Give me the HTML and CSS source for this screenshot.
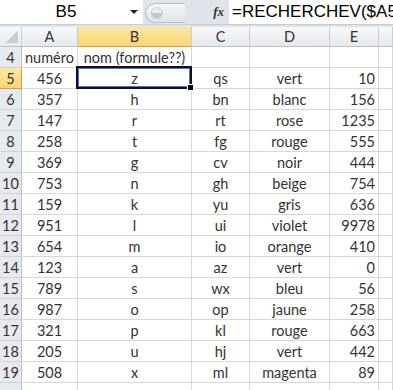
FILE: index.html
```html
<!DOCTYPE html>
<html lang="fr">
<head>
  <meta charset="UTF-8">
  <meta name="viewport" content="width=device-width, initial-scale=1.0">
  <title>Feuil1 - RECHERCHEV</title>
  <link rel="stylesheet" href="styles.css">
</head>
<body>
  <div class="formula-bar">
    <div class="name-box">
      <span class="cell-ref">B5</span>
      <span class="drop"></span>
    </div>
    <div class="tools">
      <div class="capsule"><span class="dot"></span></div>
      <span class="fx">fx</span>
    </div>
    <div class="formula">=RECHERCHEV($A5</div>
  </div>
  <div class="strip"></div>

  <table class="sheet">
    <thead>
      <tr>
        <th class="corner"><span class="tri"></span></th>
        <th class="col-a">A</th>
        <th class="col-b active">B</th>
        <th class="col-c">C</th>
        <th class="col-d">D</th>
        <th class="col-e">E</th>
        <th class="col-f"></th>
      </tr>
    </thead>
    <tbody>
      <tr><th>4</th><td>numéro</td><td class="title">nom (formule??)</td><td></td><td></td><td class="num"></td><td></td></tr>
      <tr><th class="active">5</th><td>456</td><td class="selected">z<span class="sel-box"><span class="handle"></span></span></td><td>qs</td><td>vert</td><td class="num">10</td><td></td></tr>
      <tr><th>6</th><td>357</td><td>h</td><td>bn</td><td>blanc</td><td class="num">156</td><td></td></tr>
      <tr><th>7</th><td>147</td><td>r</td><td>rt</td><td>rose</td><td class="num">1235</td><td></td></tr>
      <tr><th>8</th><td>258</td><td>t</td><td>fg</td><td>rouge</td><td class="num">555</td><td></td></tr>
      <tr><th>9</th><td>369</td><td>g</td><td>cv</td><td>noir</td><td class="num">444</td><td></td></tr>
      <tr><th>10</th><td>753</td><td>n</td><td>gh</td><td>beige</td><td class="num">754</td><td></td></tr>
      <tr><th>11</th><td>159</td><td>k</td><td>yu</td><td>gris</td><td class="num">636</td><td></td></tr>
      <tr><th>12</th><td>951</td><td>l</td><td>ui</td><td>violet</td><td class="num">9978</td><td></td></tr>
      <tr><th>13</th><td>654</td><td>m</td><td>io</td><td>orange</td><td class="num">410</td><td></td></tr>
      <tr><th>14</th><td>123</td><td>a</td><td>az</td><td>vert</td><td class="num">0</td><td></td></tr>
      <tr><th>15</th><td>789</td><td>s</td><td>wx</td><td>bleu</td><td class="num">56</td><td></td></tr>
      <tr><th>16</th><td>987</td><td>o</td><td>op</td><td>jaune</td><td class="num">258</td><td></td></tr>
      <tr><th>17</th><td>321</td><td>p</td><td>kl</td><td>rouge</td><td class="num">663</td><td></td></tr>
      <tr><th>18</th><td>205</td><td>u</td><td>hj</td><td>vert</td><td class="num">442</td><td></td></tr>
      <tr><th>19</th><td>508</td><td>x</td><td>ml</td><td>magenta</td><td class="num">89</td><td></td></tr>
      <tr><th></th><td></td><td></td><td></td><td></td><td class="num"></td><td></td></tr>
    </tbody>
  </table>
</body>
</html>
```

FILE: styles.css
```css
body {
  margin: 0;
  width: 393px;
  height: 390px;
  overflow: hidden;
  background: #fff;
  font-family: Lato, "Open Sans", sans-serif;
}

/* formula bar */
.formula-bar {
  display: flex;
  height: 24px;
  background: #dfe4ea;
}

.name-box {
  width: 143px;
  display: flex;
  align-items: center;
  background: #fff;
}

.cell-ref {
  flex: 1;
  text-align: center;
  font-family: "Liberation Sans", Arial, sans-serif;
  font-size: 17px;
  color: #000;
  padding-left: 2px;
}

.drop {
  width: 0;
  height: 0;
  margin-right: 5px;
  border-left: 4px solid transparent;
  border-right: 4px solid transparent;
  border-top: 4px solid #222;
}

.tools {
  width: 86px;
  display: flex;
  align-items: center;
  justify-content: space-between;
  padding-left: 2px;
  padding-right: 5px;
  box-sizing: border-box;
}

.capsule {
  width: 40px;
  height: 20px;
  margin-top: 2px;
  border: 1px solid #b9c0c9;
  border-right: none;
  border-radius: 11px 0 0 11px;
  background: linear-gradient(#f4f6f8, #dfe3e8);
  display: flex;
  align-items: center;
  padding-left: 5px;
  box-sizing: border-box;
}

.dot {
  width: 10px;
  height: 10px;
  border-radius: 50%;
  background: linear-gradient(#e8eaec 50%, #c4c8cc 50%);
  border: 1px solid #c9ccd0;
}

.fx {
  font-family: "Liberation Serif", serif;
  font-style: italic;
  font-weight: bold;
  font-size: 13px;
  color: #333;
}

.formula {
  flex: 1;
  background: #fff;
  font-family: "Liberation Sans", Arial, sans-serif;
  font-size: 17px;
  line-height: 24px;
  color: #000;
  padding-left: 3px;
  white-space: nowrap;
  overflow: hidden;
}

.strip {
  height: 3px;
  background: #dfe4ea;
  border-top: 1px solid #c5ccd5;
  box-sizing: border-box;
}

/* grid */
.sheet {
  width: 393px;
  table-layout: fixed;
  border-collapse: separate;
  border-spacing: 0;
  font-size: 14.5px;
  color: #333;
}

.sheet th,
.sheet td {
  box-sizing: border-box;
  height: 21px;
  padding: 0;
  border-right: 1px solid #d8d8d8;
  border-bottom: 1px solid #d8d8d8;
  text-align: center;
  white-space: nowrap;
  overflow: visible;
  font-weight: normal;
}

.sheet thead th {
  height: 20px;
  background: linear-gradient(#f7f8f9, #e6e9ed);
  border-right-color: #c9ced4;
  border-bottom-color: #b9c0c8;
  color: #333;
}

.sheet tbody th {
  background: #e6e9ee;
  border-right-color: #b9c0c8;
  border-bottom-color: #cfd4da;
  color: #333;
}

.sheet th.active {
  background: linear-gradient(#fbe6a3, #f8d676);
  border-bottom-color: #f29536;
}

.sheet tbody th.active {
  border-right-color: #f29536;
}

.corner { width: 22px; position: relative; }
.col-a { width: 56px; }
.col-b { width: 114px; }
.col-c { width: 58px; }
.col-d { width: 80px; }
.col-e { width: 49px; }
.col-f { width: 14px; }

.tri {
  position: absolute;
  right: 3px;
  bottom: 3px;
  width: 12px;
  height: 12px;
  background: linear-gradient(135deg, transparent 50%, #c9cdd2 50%);
}

.sheet td.num {
  text-align: right;
  padding-right: 3px;
}

.title {
  overflow: visible;
}

.selected {
  position: relative;
}

.sel-box {
  position: absolute;
  left: -2px;
  top: -2px;
  right: -1px;
  bottom: -1px;
  border: 2px solid #101020;
  box-shadow: inset 0 0 0 1px #4f74d8;
}

.handle {
  position: absolute;
  right: -4px;
  bottom: -4px;
  width: 5px;
  height: 5px;
  background: #000;
  border: 1px solid #fff;
}
```
